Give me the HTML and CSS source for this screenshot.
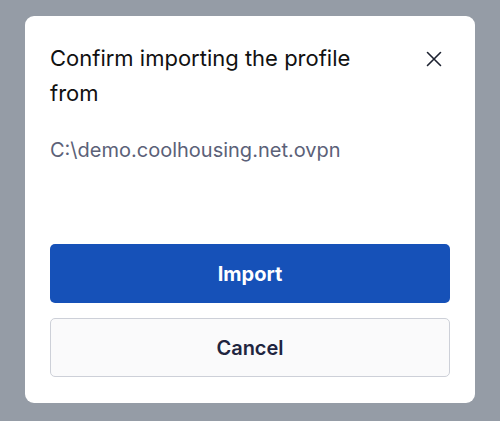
FILE: index.html
```html
<!DOCTYPE html>
<html lang="en">
<head>
<meta charset="utf-8">
<link rel="stylesheet" href="styles.css">
</head>
<body>
<div class="backdrop">
  <div class="dialog">
    <div class="header">
      <h1 class="title">Confirm importing the profile from</h1>
      <button class="close" aria-label="Close">
        <svg width="16" height="16" viewBox="0 0 16 16" fill="none" stroke="#1d2230" stroke-width="1.6" stroke-linecap="round"><path d="M1.5 1.5 L14.5 14.5 M14.5 1.5 L1.5 14.5"/></svg>
      </button>
    </div>
    <p class="path">C:\demo.coolhousing.net.ovpn</p>
    <div class="actions">
      <button class="btn primary">Import</button>
      <button class="btn secondary">Cancel</button>
    </div>
  </div>
</div>
</body>
</html>
```
FILE: styles.css
```css
html, body {
  margin: 0;
  padding: 0;
  height: 100%;
}
body {
  background: #959ca6;
  font-family: Inter, "Noto Sans", sans-serif;
}
.backdrop {
  padding: 16px 25px 0 25px;
}
.dialog {
  background: #ffffff;
  border-radius: 9px;
  padding: 25px 25px 26px 25px;
  height: 387px;
  box-sizing: border-box;
  display: flex;
  flex-direction: column;
}
.header {
  display: flex;
  align-items: flex-start;
  justify-content: space-between;
}
.title {
  margin: 0;
  font-size: 22px;
  font-weight: 400;
  line-height: 35px;
  color: #111111;
  max-width: 340px;
}
.close {
  border: none;
  background: none;
  padding: 0;
  margin: 10px 8px 0 0;
  width: 16px;
  height: 16px;
  display: flex;
}
.path {
  margin: 24px 0 0 0;
  font-size: 20px;
  line-height: 30px;
  color: #5b6178;
}
.actions {
  margin-top: auto;
  display: flex;
  flex-direction: column;
  gap: 15px;
}
.btn {
  height: 59px;
  border-radius: 5px;
  font-family: Inter, "Noto Sans", sans-serif;
  font-size: 20px;
  font-weight: 700;
  cursor: pointer;
}
.primary {
  background: #1651b8;
  border: none;
  color: #ffffff;
}
.secondary {
  background: #fafafb;
  border: 1px solid #cdd0d8;
  color: #1f2540;
  font-weight: 600;
}
```
